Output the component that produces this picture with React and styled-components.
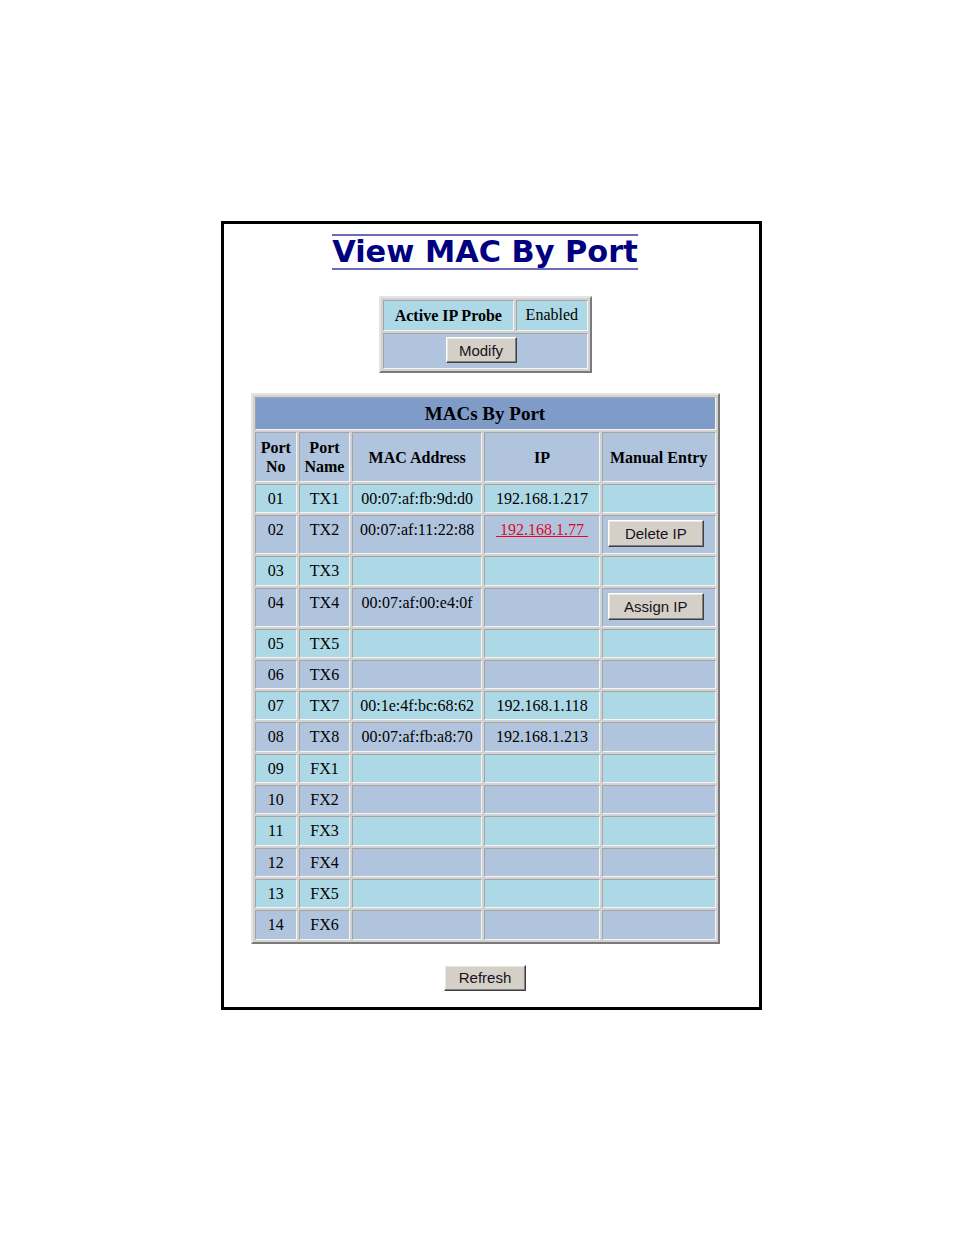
import React from 'react'
import styled, { createGlobalStyle } from 'styled-components'

const GlobalStyle = createGlobalStyle`
    body {
        margin: 0;
        background: #fff;
        font-family: "Liberation Serif", "Times New Roman", serif;
        color: #000;
    }
`;

const Page = styled.div`
    padding: 221px 0 226px 221px;
`;

const Frame = styled.div`
    border: 3px solid #000;
    display: flex;
    flex-direction: column;
    align-items: center;
    padding: 10px 13px 16px 0;
    box-sizing: content-box;
    width: 522px;
`;

const Title = styled.h1`
    margin: 0;
    font-family: "DejaVu Sans", Verdana, sans-serif;
    font-weight: bold;
    font-size: 30.4px;
    line-height: 32px;
    color: #000080;
    border-top: 2px solid #6b6bb8;
    border-bottom: 2px solid #6b6bb8;
`;

const Grid = styled.table`
    margin-top: ${p => p.gap}px;
    width: ${p => p.w}px;
    border-collapse: separate;
    border-spacing: 2px;
    border: 2px solid;
    border-color: #e4e4e4 #7a7a7a #7a7a7a #e4e4e4;
    background: #d2d2d2;
    font-size: 16px;
`;

const Cell = styled.td`
    box-sizing: border-box;
    border: 1px solid;
    border-color: #a4a4a4 #f4f4f4 #f4f4f4 #a4a4a4;
    background: ${p => p.bg || '#add8e6'};
    padding: ${p => p.pad || '4px 2px 4.3px 2px'};
    line-height: 19px;
    text-align: ${p => p.align || 'center'};
    vertical-align: ${p => p.valign || 'top'};
    font-weight: ${p => (p.bold ? 'bold' : 'normal')};
    white-space: nowrap;
`;

const Caption = styled.td`
    box-sizing: border-box;
    height: 33px;
    border: 1px solid;
    border-color: #a4a4a4 #f4f4f4 #f4f4f4 #a4a4a4;
    background: #7f9bc8;
    font-size: 19px;
    font-weight: bold;
    text-align: center;
    vertical-align: middle;
    padding: 0;
`;

const Head = styled.th`
    box-sizing: border-box;
    width: ${p => p.w}px;
    border: 1px solid;
    border-color: #a4a4a4 #f4f4f4 #f4f4f4 #a4a4a4;
    background: #b0c4de;
    padding: 5px 0;
    line-height: 19px;
    font-weight: bold;
    text-align: center;
    vertical-align: middle;
`;

const Button = styled.button`
    width: ${p => p.w}px;
    height: ${p => p.h || 27}px;
    display: block;
    margin: ${p => (p.center ? '0 auto' : '0')};
    padding: 0;
    background: #d4d0c8;
    border: 1px solid;
    border-color: #ffffff #404040 #404040 #ffffff;
    box-shadow: inset -1px -1px 0 #808080, inset 1px 1px 0 #e8e6e0;
    font-family: "Liberation Sans", Arial, sans-serif;
    font-size: 15px;
    color: #1a1020;
`;

const IpLink = styled.a`
    color: #dc0a2a;
    text-decoration: underline;
    text-decoration-color: #dc0a2a;
`;

const RefreshBar = styled.div`
    margin-top: 21px;
`;

const ports = [
    { no: '01', name: 'TX1', mac: '00:07:af:fb:9d:d0', ip: '192.168.1.217' },
    { no: '02', name: 'TX2', mac: '00:07:af:11:22:88', ip: '192.168.1.77', action: 'Delete IP', manual: true },
    { no: '03', name: 'TX3' },
    { no: '04', name: 'TX4', mac: '00:07:af:00:e4:0f', action: 'Assign IP' },
    { no: '05', name: 'TX5' },
    { no: '06', name: 'TX6' },
    { no: '07', name: 'TX7', mac: '00:1e:4f:bc:68:62', ip: '192.168.1.118' },
    { no: '08', name: 'TX8', mac: '00:07:af:fb:a8:70', ip: '192.168.1.213' },
    { no: '09', name: 'FX1' },
    { no: '10', name: 'FX2' },
    { no: '11', name: 'FX3' },
    { no: '12', name: 'FX4' },
    { no: '13', name: 'FX5' },
    { no: '14', name: 'FX6' },
];

function PortRow({ port, index }) {
    const bg = index % 2 === 0 ? '#add8e6' : '#b0c4de';
    const tall = !!port.action;
    const pad = tall ? '4px 2px 6px 2px' : '4px 2px 4.3px 2px';
    return (
        <tr>
            <Cell bg={bg} pad={pad}>{port.no}</Cell>
            <Cell bg={bg} pad={pad}>{port.name}</Cell>
            <Cell bg={bg} pad={pad}>{port.mac || ''}</Cell>
            <Cell bg={bg} pad={pad}>
                {port.manual
                    ? <IpLink href="#">{'\u00a0' + port.ip + '\u00a0'}</IpLink>
                    : port.ip || ''}
            </Cell>
            <Cell bg={bg} pad={pad} align="left" valign="top">
                {port.action && <Button w={96} style={{ marginLeft: 3 }}>{port.action}</Button>}
            </Cell>
        </tr>
    )
}

export default function App() {
    return (
        <Page>
            <GlobalStyle />
            <Frame>
                <Title>View MAC By Port</Title>

                <Grid gap={26} w={213}>
                    <tbody>
                        <tr>
                            <Cell bold valign="middle" pad="5px 2px" style={{ width: 134 }}>Active IP Probe</Cell>
                            <Cell valign="top" pad="4px 2px 6px" style={{ width: 73 }}>Enabled</Cell>
                        </tr>
                        <tr>
                            <Cell colSpan={2} bg="#b0c4de" pad="3px 10px 5px 2px">
                                <Button w={71} h={26} center>Modify</Button>
                            </Cell>
                        </tr>
                    </tbody>
                </Grid>

                <Grid gap={20} w={469}>
                    <tbody>
                        <tr>
                            <Caption colSpan={5}>MACs By Port</Caption>
                        </tr>
                        <tr>
                            <Head w={43}>Port<br />No</Head>
                            <Head w={51}>Port<br />Name</Head>
                            <Head w={131}>MAC Address</Head>
                            <Head w={116}>IP</Head>
                            <Head w={114}>Manual Entry</Head>
                        </tr>
                        {ports.map((p, i) => (
                            <PortRow key={p.no} port={p} index={i} />
                        ))}
                    </tbody>
                </Grid>

                <RefreshBar>
                    <Button w={82} h={26}>Refresh</Button>
                </RefreshBar>
            </Frame>
        </Page>
    )
}
